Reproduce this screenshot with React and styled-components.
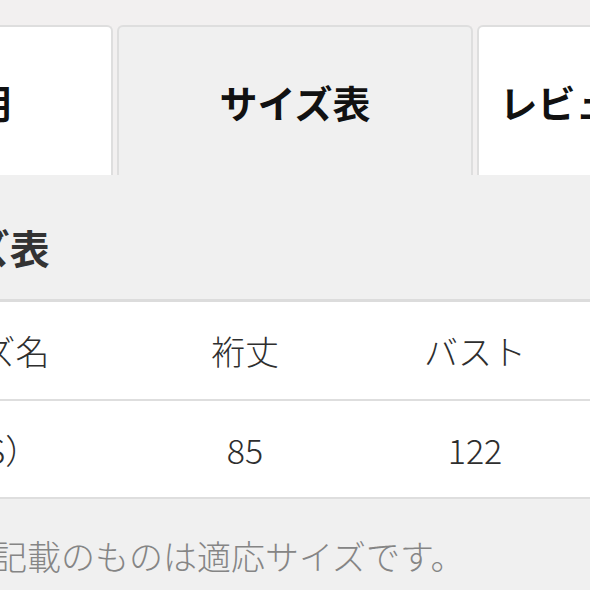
import styled, { createGlobalStyle } from "styled-components";

const GlobalStyle = createGlobalStyle`
  html, body {
    margin: 0;
    padding: 0;
    background: #f2f0f0;
    overflow: hidden;
    font-family: "Noto Sans CJK JP", "Noto Sans", sans-serif;
  }
`;

const Page = styled.div`
  width: 1100px;
  margin-left: -243px;
`;

const TabBar = styled.div`
  display: flex;
  gap: 4px;
  padding-top: 25px;
`;

const Tab = styled.div`
  flex: 0 0 356px;
  height: 150px;
  box-sizing: border-box;
  border: 2px solid #dedede;
  border-bottom: none;
  border-radius: 6px 6px 0 0;
  background: ${({ $active }) => ($active ? "#f0f0f0" : "#ffffff")};
  display: flex;
  align-items: center;
  justify-content: center;
  font-size: 38px;
  font-weight: 700;
  color: #111;
  white-space: nowrap;
  overflow: hidden;
`;

const Panel = styled.div`
  background: #f0f0f0;
  padding-bottom: 40px;
`;

const Heading = styled.h2`
  margin: 0;
  box-sizing: border-box;
  height: 124px;
  padding: 44px 0 0 134px;
  font-size: 40px;
  line-height: 56px;
  font-weight: 700;
  color: #333;
`;

const Table = styled.div`
  border-top: 3px solid #dcdcdc;
  background: #fff;
`;

const Row = styled.div`
  display: grid;
  grid-template-columns: 296px 230px 230px 230px;
  padding-left: 77px;
  height: ${({ $h }) => $h}px;
  align-items: center;
  border-bottom: 2px solid #dedede;
`;

const Cell = styled.div`
  text-align: center;
  font-size: 34px;
  font-weight: 300;
  color: #2e2e2e;
  white-space: nowrap;
`;

const Note = styled.p`
  margin: 0;
  padding: 33px 0 0 66px;
  font-size: 34px;
  font-weight: 300;
  line-height: 48px;
  color: #858585;
  white-space: nowrap;
`;

const tabs = [
  { label: "商品説明" },
  { label: "サイズ表", active: true },
  { label: "レビュー（12件）" },
];

const header = ["サイズ名", "裄丈", "バスト", "着丈"];
const rows = [["M（S）", "85", "122", "64"]];

export default function App() {
  return (
    <Page>
      <GlobalStyle />
      <TabBar>
        {tabs.map((t) => (
          <Tab key={t.label} $active={t.active}>
            {t.label}
          </Tab>
        ))}
      </TabBar>
      <Panel>
        <Heading>サイズ表</Heading>
        <Table>
          <Row $h={97}>
            {header.map((h) => (
              <Cell key={h}>{h}</Cell>
            ))}
          </Row>
          {rows.map((r, i) => (
            <Row key={i} $h={96}>
              {r.map((c, j) => (
                <Cell key={j}>{c}</Cell>
              ))}
            </Row>
          ))}
        </Table>
        <Note>※（）内に記載のものは適応サイズです。</Note>
      </Panel>
    </Page>
  );
}
